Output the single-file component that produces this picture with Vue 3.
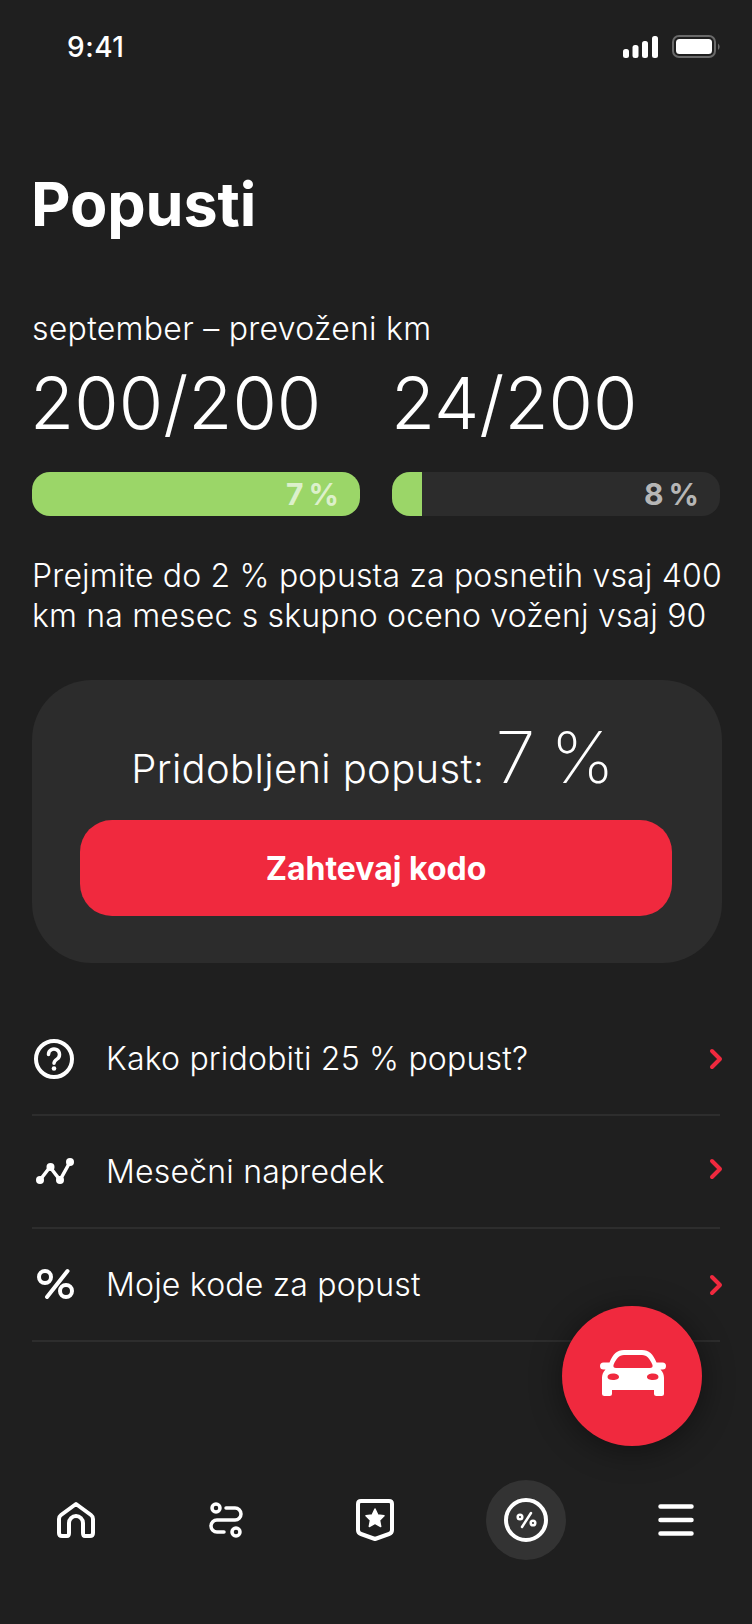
<script setup>
const rows = [
  { label: 'Kako pridobiti 25 % popust?', icon: 'help' },
  { label: 'Mesečni napredek', icon: 'trend' },
  { label: 'Moje kode za popust', icon: 'pct' }
]
const stats = [
  { value: '200/200', pct: '7 %', fill: 100, done: true },
  { value: '24/200', pct: '8 %', fill: 9.1, done: false }
]
</script>

<template>
  <div class="page">
    <header class="status">
      <span class="time">9:41</span>
      <div class="status-icons">
        <svg width="35" height="22" viewBox="0 0 35 22" fill="#fff">
          <rect x="0" y="13" width="6" height="9" rx="2.5" />
          <rect x="9.500" y="9" width="6" height="13" rx="2.5" />
          <rect x="19" y="5" width="6" height="17" rx="2.5" />
          <rect x="29" y="0" width="6" height="22" rx="2.5" />
        </svg>
        <svg width="48" height="23" viewBox="0 0 48 23" fill="none">
          <rect x="1" y="1" width="42" height="21" rx="6" stroke="#6a6a6a" stroke-width="2" />
          <rect x="4" y="4" width="36" height="15" rx="3.5" fill="#fff" />
          <path d="M46 8.5a4 4 0 0 1 0 6.5z" fill="#6a6a6a" />
        </svg>
      </div>
    </header>

    <h1 class="title">Popusti</h1>
    <p class="sub">september – prevoženi km</p>

    <div class="stats">
      <div v-for="s in stats" :key="s.value" class="stat">
        <div class="value">{{ s.value }}</div>
        <div class="bar">
          <div class="fill" :style="{ width: s.fill + '%' }"></div>
          <span class="pct" :class="{ done: s.done }">{{ s.pct }}</span>
        </div>
      </div>
    </div>

    <p class="desc">Prejmite do 2 % popusta za posnetih vsaj 400<br />km na mesec s skupno oceno voženj vsaj 90</p>

    <section class="card">
      <div class="earned"><span>Pridobljeni popust:</span><span class="big">7 %</span></div>
      <button class="cta">Zahtevaj kodo</button>
    </section>

    <ul class="list">
      <li v-for="r in rows" :key="r.label" class="row">
        <span class="row-icon">
          <svg v-if="r.icon === 'help'" width="44" height="44" viewBox="0 0 44 44" fill="none" stroke="#fff" stroke-width="4" stroke-linecap="round">
            <circle cx="22" cy="22" r="18" />
            <path d="M16.5 17.5a5.5 5.5 0 1 1 8.5 4.6c-1.800 1.200-3 2.200-3 4.200" stroke-width="3.500" />
            <circle cx="22" cy="31.500" r="2.300" fill="#fff" stroke="none" />
          </svg>
          <svg v-else-if="r.icon === 'trend'" width="44" height="44" viewBox="-1 0 44 44" fill="none" stroke="#fff" stroke-width="3.500" stroke-linecap="round">
            <path d="M7 30 17 17 27 30 37 12" />
            <g fill="#fff" stroke="none">
              <circle cx="7" cy="30" r="4" />
              <circle cx="17.500" cy="17" r="4" />
              <circle cx="27" cy="30" r="4" />
              <circle cx="37" cy="12" r="4" />
            </g>
          </svg>
          <svg v-else width="44" height="44" viewBox="1 0 44 44" fill="none" stroke="#fff" stroke-width="4" stroke-linecap="round">
            <circle cx="14" cy="14" r="6" />
            <circle cx="35" cy="28" r="6" />
            <path d="M36.500 8 16 34" />
          </svg>
        </span>
        <span class="row-label">{{ r.label }}</span>
        <svg class="chev" width="14" height="22" viewBox="0 0 14 22" fill="none" stroke="#f0293e" stroke-width="4" stroke-linecap="round" stroke-linejoin="round">
          <path d="M3 3 11 11 3 19" />
        </svg>
      </li>
    </ul>

    <button class="fab" aria-label="Vožnja">
      <svg class="car" width="66" height="46" viewBox="0 0 66 46" fill="#fff">
        <path fill-rule="evenodd" d="M24 0H42C49 0 53 4 56.500 12.500H62.500A3.500 3.500 0 0 1 62.500 19.500H60.500C63 22 64 25 64 28V43.500A2.500 2.500 0 0 1 61.500 46H56.500A2.500 2.500 0 0 1 54 43.500V40H12V43.500A2.500 2.500 0 0 1 9.500 46H4.500A2.500 2.500 0 0 1 2 43.500V28C2 25 3 22 5.500 19.500H3.500A3.500 3.500 0 0 1 3.500 12.500H9.500C13 4 17 0 24 0ZM24 5C19 5 16 9 13.500 15C13 17 14 18 16 18H50C52 18 53 17 52.500 15C50 9 47 5 42 5ZM13 23.500C9.500 23.500 7.500 25 7.500 27S9.500 30 13 30C16.500 30 19 29 19 27S16.500 23.500 13 23.500ZM53 23.500C49.500 23.500 47 25 47 27S49.500 30 53 30C56.500 30 58.500 29 58.500 27S56.500 23.500 53 23.500Z" />
      </svg>
    </button>

    <nav class="nav">
      <span class="nav-item">
        <svg width="40" height="38" viewBox="0 0 40 38" fill="none" stroke="#fff" stroke-width="4" stroke-linejoin="round">
          <path d="M20 3 35 14Q37 15.500 37 18V32Q37 35 34 35H29Q27 35 27 32V22A7 7 0 0 0 13 22V32Q13 35 11 35H6Q3 35 3 32V18Q3 15.500 5 14Z" />
        </svg>
      </span>
      <span class="nav-item">
        <svg width="40" height="40" viewBox="-2 0 40 40" fill="none" stroke="#fff" stroke-width="3.500" stroke-linecap="round">
          <circle cx="8" cy="8" r="4" />
          <circle cx="28" cy="32" r="4" />
          <path d="M18 8H27A6 6 0 0 1 27 20H9A6 6 0 0 0 9 32H16" />
        </svg>
      </span>
      <span class="nav-item">
        <svg width="40" height="44" viewBox="1 0 40 44" fill="none" stroke="#fff" stroke-width="4" stroke-linejoin="round">
          <path d="M6 3H34Q37 3 37 6V32Q37 35 34 36L20 41 6 36Q3 35 3 32V6Q3 3 6 3Z" />
          <path d="M20 11 22.800 17 29 17.800 24.500 22.200 25.700 28.500 20 25.300 14.300 28.500 15.500 22.200 11 17.800 17.200 17Z" fill="#fff" stroke-width="1.500" />
        </svg>
      </span>
      <span class="nav-item active">
        <svg width="44" height="44" viewBox="0 0 44 44" fill="none" stroke="#fff" stroke-width="4" stroke-linecap="round">
          <circle cx="22" cy="22" r="20" />
          <circle cx="16" cy="19" r="2.300" stroke-width="2.500" />
          <circle cx="29" cy="25" r="2.300" stroke-width="2.500" />
          <path d="M27 15 18 29" stroke-width="2.500" />
        </svg>
      </span>
      <span class="nav-item">
        <svg width="36" height="32" viewBox="0 0 36 32" fill="none" stroke="#fff" stroke-width="4.500" stroke-linecap="round">
          <path d="M2.500 2.500H33.500M2.500 16H33.500M2.500 29.500H33.500" />
        </svg>
      </span>
    </nav>
  </div>
</template>

<style>
html, body { background: #1f1f1f; }
</style>

<style scoped>
.page {
  position: relative;
  width: 752px;
  height: 1624px;
  box-sizing: border-box;
  padding: 0 32px;
  background: #1f1f1f;
  color: #fff;
  font-family: Inter, "Liberation Sans", sans-serif;
  overflow: hidden;
  display: flex;
  flex-direction: column;
}
.status {
  height: 93px;
  display: flex;
  align-items: center;
  justify-content: space-between;
  padding: 0 0 0 35px;
}
.time { font-size: 28px; font-weight: 500; line-height: 1; letter-spacing: 0.5px; }
.status-icons { display: flex; align-items: center; gap: 14px; }
.title {
  margin: 75px 0 0 -1px;
  font-size: 61px;
  font-weight: 700;
  line-height: 72px;
  letter-spacing: -0.1px;
}
.sub { margin: 71px 0 0; font-size: 32px; font-weight: 300; line-height: 36px; letter-spacing: 0.28px; }
.stats { display: grid; grid-template-columns: 328px 328px; gap: 32px; margin-top: 12px; }
.value { font-size: 72px; font-weight: 300; line-height: 88px; white-space: nowrap; margin-left: -2px; }
.stat:last-child .value { margin-left: -1px; }
.bar {
  position: relative;
  height: 44px;
  margin-top: 25px;
  border-radius: 18px;
  background: #2c2c2c;
  overflow: hidden;
}
.fill { height: 100%; background: #9bd668; }
.pct {
  position: absolute;
  right: 21px;
  top: 0;
  line-height: 44px;
  font-size: 30px;
  font-weight: 700;
  word-spacing: -2px;
  color: rgba(255, 255, 255, 0.68);
}
.desc { margin: 40px 0 0; font-size: 32px; font-weight: 300; line-height: 40px; letter-spacing: 0.17px; white-space: nowrap; }
.card {
  width: 690px;
  height: 283px;
  box-sizing: border-box;
  margin-top: 44px;
  padding: 39px 48px 0;
  border-radius: 60px;
  background: #2c2c2c;
}
.earned {
  height: 85px;
  padding-right: 8px;
  display: flex;
  align-items: baseline;
  justify-content: center;
  gap: 11px;
  font-size: 40px;
  font-weight: 300;
  letter-spacing: 0.35px;
}
.big { font-size: 72px; font-weight: 200; line-height: 76px; letter-spacing: 0; word-spacing: -5px; }
.cta {
  display: block;
  width: 592px;
  height: 96px;
  margin-top: 16px;
  border: 0;
  border-radius: 32px;
  background: #f0293e;
  color: #fff;
  font: 700 32px Inter, "Liberation Sans", sans-serif;
}
.list { list-style: none; margin: 40px 0 0; padding: 0; width: 688px; }
.row {
  height: 111px;
  display: flex;
  align-items: center;
  border-bottom: 2px solid #2d2d2d;
}
.row-icon { width: 74px; height: 44px; display: block; }
.row-label { flex: 1; font-size: 32px; font-weight: 300; letter-spacing: 0.19px; }
.chev { margin-right: -3px; }
.row:nth-child(2) .chev { margin-bottom: 5px; }
.fab {
  position: absolute;
  left: 562px;
  top: 1306px;
  width: 140px;
  height: 140px;
  padding: 0;
  border: 0;
  border-radius: 50%;
  background: #f0293e;
  box-shadow: 0 4px 32px rgba(0, 0, 0, 0.45);
  display: flex;
  align-items: center;
  justify-content: center;
}
.car { margin: 0 0 6px 2px; }
.nav {
  position: absolute;
  left: 36px;
  right: 36px;
  top: 1480px;
  height: 80px;
  display: flex;
  justify-content: space-between;
  align-items: center;
}
.nav-item { width: 80px; height: 80px; display: flex; align-items: center; justify-content: center; border-radius: 50%; }
.active { background: #333; }
</style>
